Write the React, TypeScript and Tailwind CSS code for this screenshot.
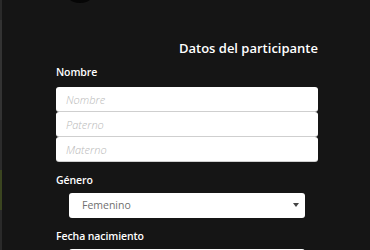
import React from "react";

const inputCls =
  "block w-full h-[24px] shrink-0 rounded-[3px] bg-white px-[10px] text-[11px] italic font-light placeholder:text-[#b8b8b8] outline-none shadow-[0_1px_0_#cfcfcf]";

const labelCls = "text-white text-[10.5px] font-semibold leading-[16px] tracking-[-0.1px]";

export default function App() {
  return (
    <div
      className="relative w-[370px] h-[250px] overflow-hidden bg-[#151515] flex"
      style={{ fontFamily: '"Open Sans", sans-serif' }}
    >
      <div className="w-[2px] flex flex-col shrink-0">
        <div className="h-[20px] bg-[#2a2a2a]" />
        <div className="h-[100px] bg-[#333333]" />
        <div className="h-[50px] bg-[#2c2c2c]" />
        <div className="h-[40px] bg-[#3b4520]" />
        <div className="flex-1 bg-[#2a2a2a]" />
      </div>
      <div className="absolute left-[62px] top-[-34px] w-[36px] h-[37px] rounded-full bg-[#060606]" />
      <div className="flex-1 pl-[54px] pr-[52px] pt-[39px]">
        <h2 className="text-right text-white text-[13px] font-semibold leading-[18px]">
          Datos del participante
        </h2>
        <div className={`mt-[7px] ${labelCls}`}>Nombre</div>
        <div className="mt-[7px] flex flex-col gap-[1px]">
          <input placeholder="Nombre" className={inputCls} />
          <input placeholder="Paterno" className={inputCls} />
          <input placeholder="Materno" className={inputCls} />
        </div>
        <div className={`mt-[11px] ${labelCls}`}>Género</div>
        <div className="mt-[5px] ml-[13px] mr-[13px] h-[25px] rounded-[3px] bg-white flex items-center justify-between pl-[13px] pr-[6px]">
          <span className="text-[10.5px] text-[#707070]">Femenino</span>
          <svg width="6" height="5" viewBox="0 0 6 5">
            <path d="M0 0 L6 0 L3 4 Z" fill="#444" />
          </svg>
        </div>
        <div className={`mt-[10px] ${labelCls}`}>Fecha nacimiento</div>
        <div className="mt-[5px] ml-[13px] mr-[13px] h-[25px] rounded-[3px] bg-white" />
      </div>
    </div>
  );
}
